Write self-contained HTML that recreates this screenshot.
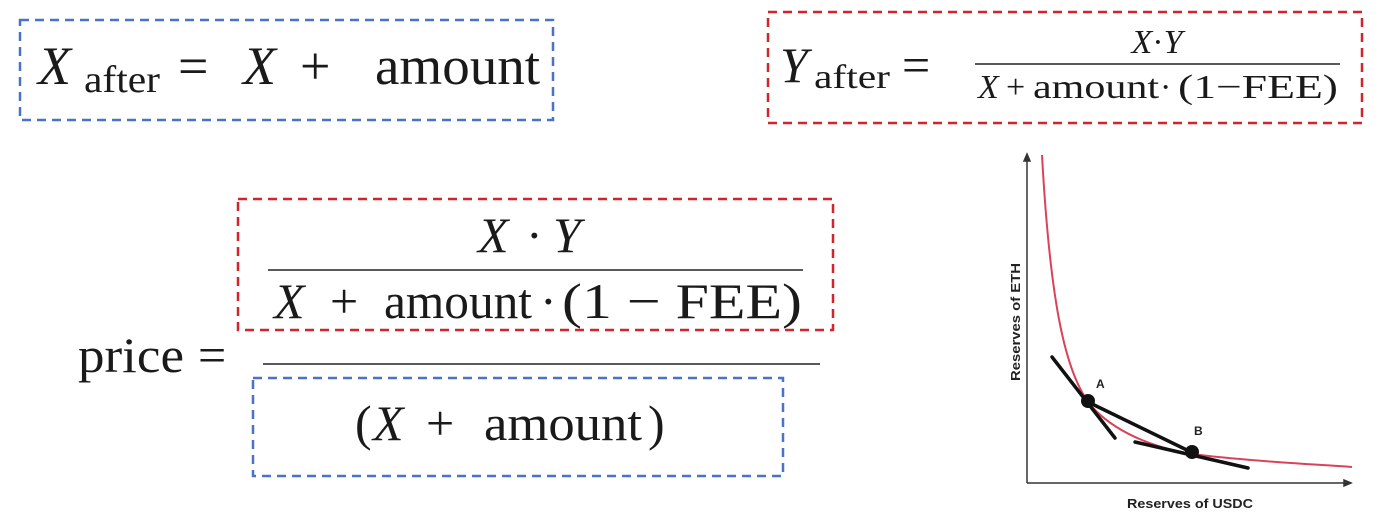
<!DOCTYPE html>
<html><head><meta charset="utf-8"><style>
html,body{margin:0;padding:0;background:#fff;width:1388px;height:518px;overflow:hidden}
svg{display:block}
.m{font-family:"Liberation Serif",serif;fill:#1a1a1a}
.i{font-style:italic}
.l{font-family:"Liberation Sans",sans-serif;font-weight:bold;fill:#222}
</style></head><body>
<svg width="1388" height="518" viewBox="0 0 1388 518">
<g fill="none" stroke-width="2.5" stroke-dasharray="9,6">
<rect x="20" y="20" width="533" height="100" stroke="#4a72c8"/>
<rect x="768" y="12" width="594" height="111" stroke="#d0262b"/>
<rect x="238" y="199" width="595" height="131" stroke="#d0262b"/>
<rect x="253" y="378" width="530" height="98" stroke="#4a72c8"/>
</g>
<g class="m" font-size="54">
<text x="38" y="84" class="i m">X</text>
<text x="84" y="92" font-size="38" class="m" textLength="76" lengthAdjust="spacingAndGlyphs">after</text>
<text x="178" y="84" class="m">=</text>
<text x="243" y="84" class="i m">X</text>
<text x="300" y="84" class="m">+</text>
<text x="375" y="84" class="m" textLength="165" lengthAdjust="spacingAndGlyphs">amount</text>
</g>
<text class="m i" x="780" y="82" font-size="50">Y</text>
<text class="m" x="814" y="88" font-size="34" textLength="76" lengthAdjust="spacingAndGlyphs">after</text>
<text class="m" x="902" y="82" font-size="50">=</text>
<text class="m" x="1157" y="53" font-size="34" text-anchor="middle"><tspan class="i">X</tspan>·<tspan class="i">Y</tspan></text>
<line x1="975" y1="64" x2="1340" y2="64" stroke="#222" stroke-width="1.5"/>
<text class="m i" x="978" y="98" font-size="34">X</text>
<text class="m" x="1006" y="98" font-size="34">+</text>
<text class="m" x="1033" y="98" font-size="34" textLength="126" lengthAdjust="spacingAndGlyphs">amount</text>
<text class="m" x="1160" y="98" font-size="34">·</text>
<text class="m" x="1178" y="98" font-size="34" textLength="160" lengthAdjust="spacingAndGlyphs">(1−FEE)</text>
<text class="m i" x="478" y="252" font-size="50">X</text>
<text class="m" x="526" y="252" font-size="50">·</text>
<text class="m i" x="553" y="252" font-size="50">Y</text>
<line x1="268" y1="270" x2="803" y2="270" stroke="#222" stroke-width="1.5"/>
<text class="m i" x="274" y="318" font-size="50">X</text>
<text class="m" x="330" y="318" font-size="50">+</text>
<text class="m" x="384" y="318" font-size="50" textLength="148" lengthAdjust="spacingAndGlyphs">amount</text>
<text class="m" x="540" y="318" font-size="50">·</text>
<text class="m" x="562" y="318" font-size="50" textLength="240" lengthAdjust="spacingAndGlyphs">(1 − FEE)</text>
<text class="m" x="78" y="372" font-size="50" textLength="106" lengthAdjust="spacingAndGlyphs">price</text>
<text class="m" x="198" y="372" font-size="50">=</text>
<line x1="263" y1="364" x2="820" y2="364" stroke="#222" stroke-width="1.5"/>
<text class="m" x="355" y="440" font-size="50">(</text>
<text class="m i" x="373" y="440" font-size="50">X</text>
<text class="m" x="426" y="440" font-size="50">+</text>
<text class="m" x="484" y="440" font-size="50" textLength="158" lengthAdjust="spacingAndGlyphs">amount</text>
<text class="m" x="648" y="440" font-size="50">)</text>
<g stroke="#333" stroke-width="1.5" fill="#333">
<line x1="1027" y1="157" x2="1027" y2="483"/>
<line x1="1027" y1="483" x2="1348" y2="483"/>
<path d="M1027,154 l-3,7 h6z"/>
<path d="M1351,483 l-7,-3 v6z"/>
</g>
<path d="M1042,155 C1050,300 1065,380 1095,410 C1120,435 1160,450 1200,455 C1260,462 1310,464 1352,467" fill="none" stroke="#d9435a" stroke-width="2"/>
<g stroke="#111" stroke-width="3.5" stroke-linecap="round">
<line x1="1052" y1="357" x2="1115" y2="438"/>
<line x1="1088" y1="402" x2="1193" y2="453"/>
<line x1="1135" y1="442" x2="1248" y2="468"/>
</g>
<circle cx="1088" cy="401" r="7" fill="#111"/>
<circle cx="1192" cy="452" r="7" fill="#111"/>
<text class="l" x="1096" y="388" font-size="12">A</text>
<text class="l" x="1194" y="435" font-size="12">B</text>
<text class="l" x="1190" y="508" font-size="13" text-anchor="middle" textLength="126" lengthAdjust="spacingAndGlyphs">Reserves of USDC</text>
<text class="l" font-size="13" text-anchor="middle" textLength="118" lengthAdjust="spacingAndGlyphs" transform="translate(1020,322) rotate(-90)">Reserves of ETH</text>
</svg>
</body></html>
